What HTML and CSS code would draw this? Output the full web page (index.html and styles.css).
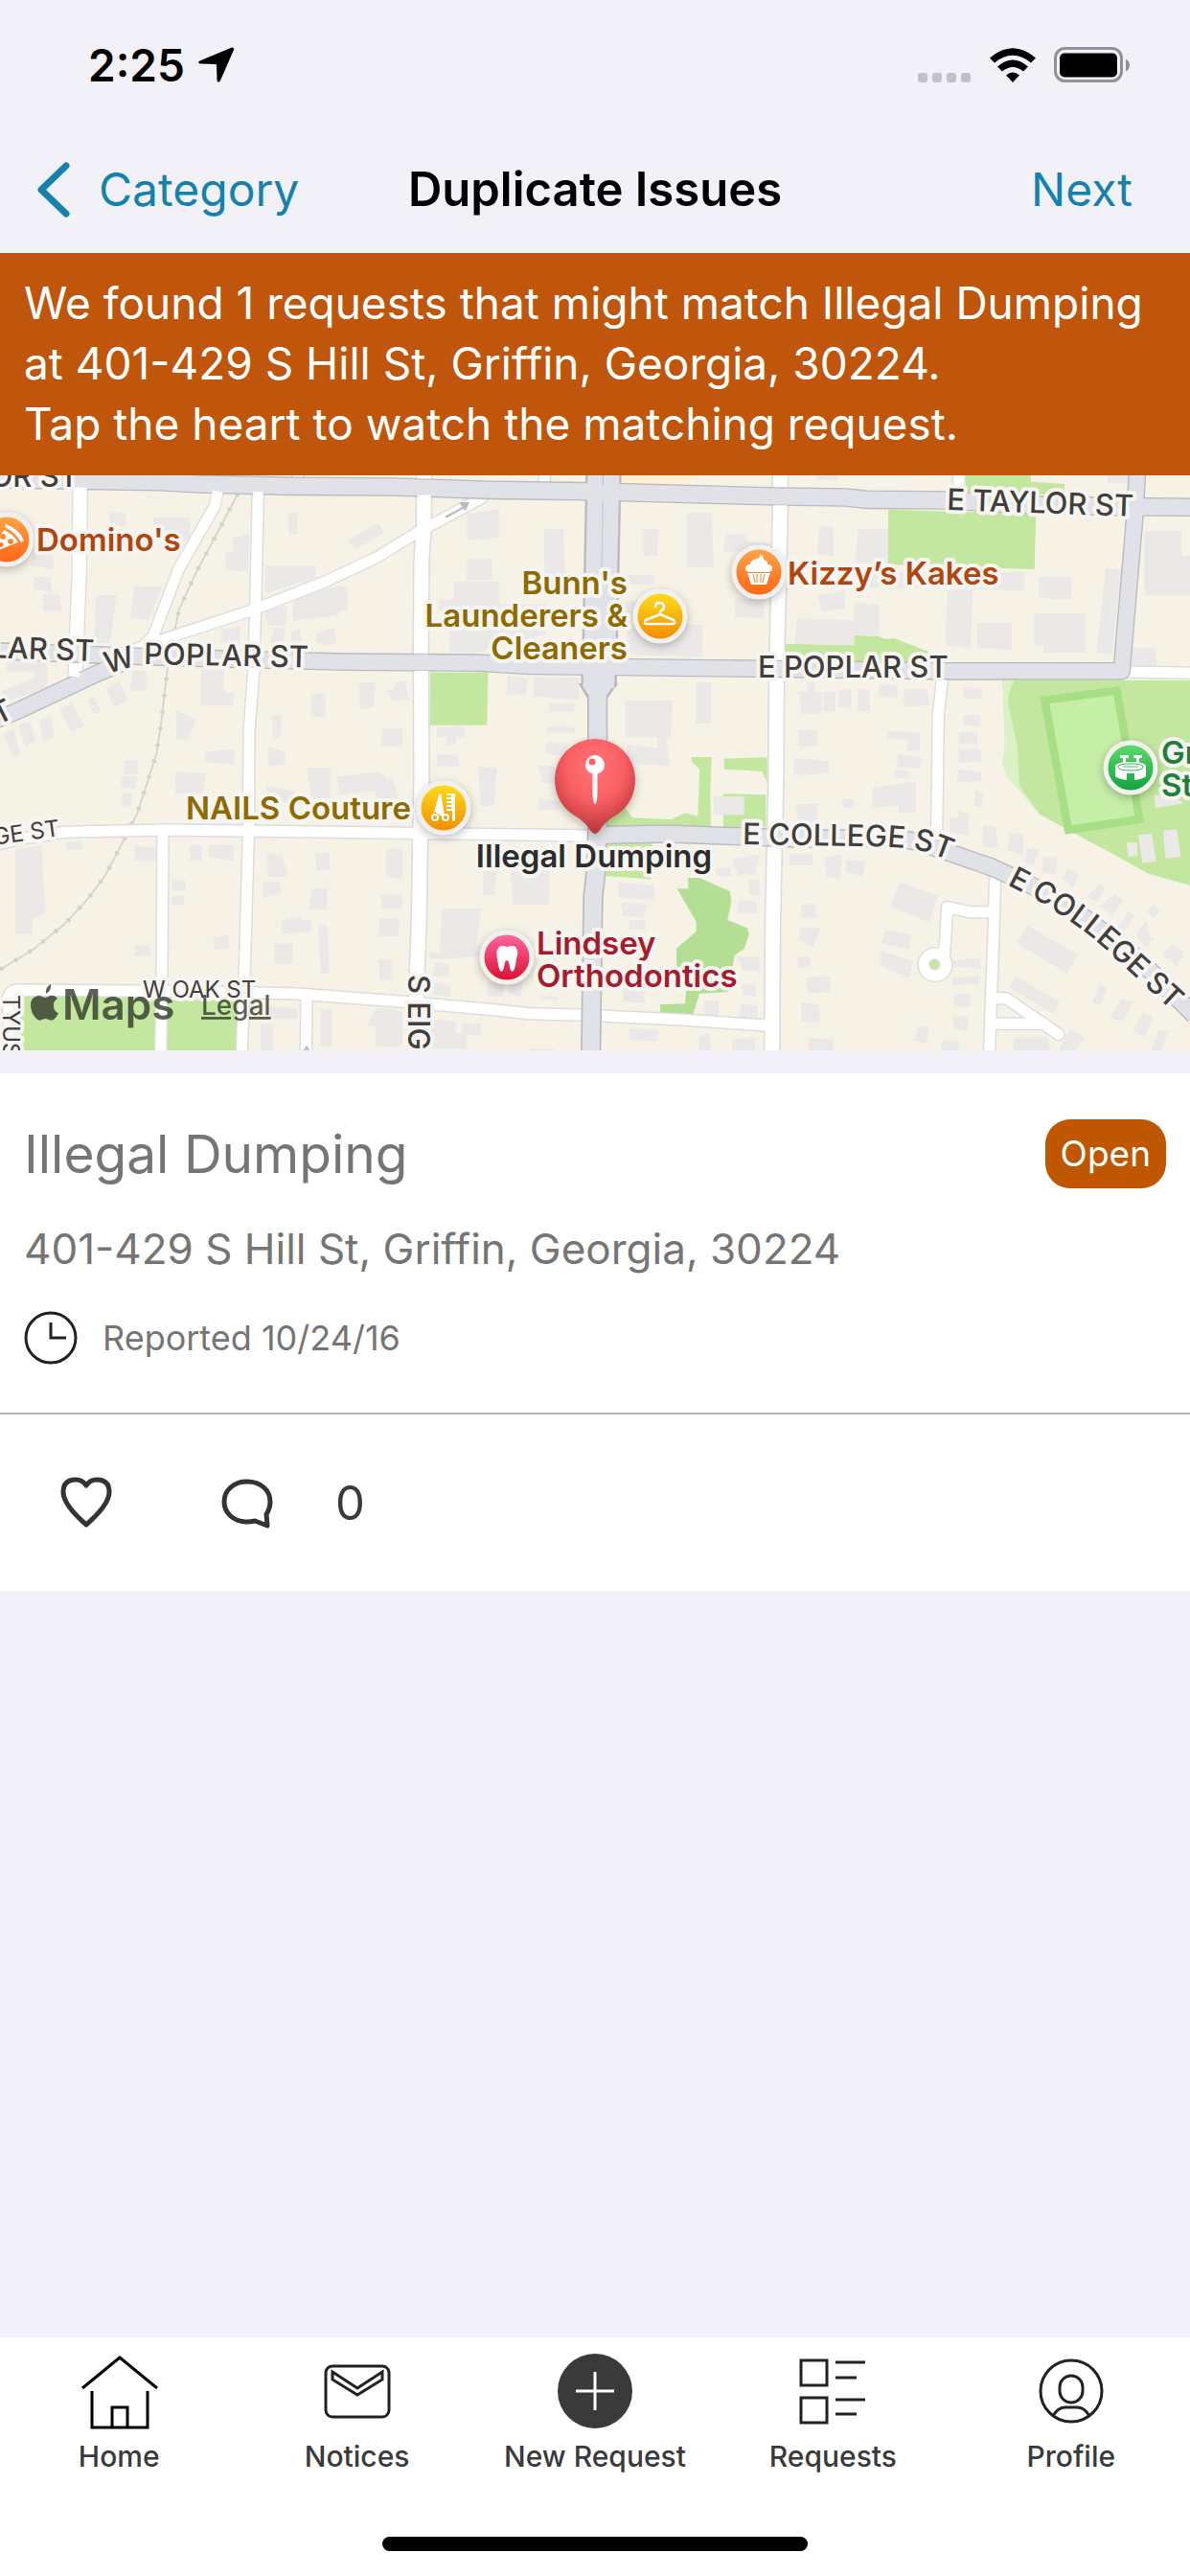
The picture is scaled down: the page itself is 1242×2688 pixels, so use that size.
FILE: index.html
```html
<!DOCTYPE html>
<html lang="en">
<head>
    <meta charset="UTF-8">
    <meta name="viewport" content="width=device-width, initial-scale=1.0">
    <title>Duplicate Issues</title>
    <link rel="stylesheet" href="styles.css">
</head>
<body>
    <!-- Status bar -->
    <div class="status-bar">
        <div class="status-left">
            <span>2:25</span>
            <svg width="40" height="40" viewBox="0 0 40 40"><path d="M37 1.5 Q39.500 1 39 4 L25 36 Q23 39.500 21.500 36 L21 20 Q21 19 20 19 L4 18.500 Q0.500 17.500 3.500 15.500 Z"/></svg>
        </div>
        <div class="status-right">
            <svg width="56" height="38" viewBox="0 0 56 38" fill="#c2c1c7"><rect y="27" width="10" height="10" rx="3"/><rect x="15" y="27" width="10" height="10" rx="3"/><rect x="30" y="27" width="10" height="10" rx="3"/><rect x="45" y="27" width="10" height="10" rx="3"/></svg>
            <svg width="48" height="38" viewBox="0 0 48 38"><path d="M0 11.500 Q24 -9 48 11.500 L43 16.500 Q24 1 5 16.500 Z M8 20.500 Q24 6.500 40 20.500 L35 25.500 Q24 16.500 13 25.500 Z M17 29.500 Q24 23.500 31 29.500 L24 37 Z"/></svg>
            <svg width="80" height="38" viewBox="0 0 80 38"><rect x="1.500" y="1.500" width="69" height="34" rx="10" fill="none" stroke="#929196" stroke-width="3"/><rect x="6" y="6.500" width="60" height="25" rx="5"/><path d="M75 12.500 Q79 15 79 19 Q79 23 75 25.500 Z" fill="#929196"/></svg>
        </div>
    </div>

    <!-- Nav bar -->
    <header class="nav-bar">
        <button class="nav-btn back-btn">
            <svg width="36" height="58" viewBox="0 0 36 58"><path d="M31 4 L5 29 L31 54" fill="none" stroke="currentColor" stroke-width="7" stroke-linecap="round" stroke-linejoin="round"/></svg>
            <span>Category</span>
        </button>
        <h1>Duplicate Issues</h1>
        <button class="nav-btn next-btn">Next</button>
    </header>

    <p class="banner">We found 1 requests that might match Illegal Dumping at 401-429 S Hill St, Griffin, Georgia, 30224.<br>Tap the heart to watch the matching request.</p>

    <!-- Map -->
    <svg class="map" viewBox="0 0 1242 600" role="img" aria-label="Map">
        <defs>
            <linearGradient id="orange" x2="0" y2="1"><stop stop-color="#ffa64a"/><stop offset="1" stop-color="#ff6414"/></linearGradient>
            <linearGradient id="yellow" x2="0" y2="1"><stop stop-color="#ffdf1c"/><stop offset="1" stop-color="#f08a00"/></linearGradient>
            <linearGradient id="pink" x2="0" y2="1"><stop stop-color="#ff6aa5"/><stop offset="1" stop-color="#d90d2c"/></linearGradient>
            <linearGradient id="green" x2="0" y2="1"><stop stop-color="#60dc6c"/><stop offset="1" stop-color="#10a040"/></linearGradient>
            <radialGradient id="pin" cx=".5" cy=".3" r=".72"><stop stop-color="#ff7478"/><stop offset=".5" stop-color="#f95f63"/><stop offset="1" stop-color="#b03238"/></radialGradient>
            <filter id="shadow" x="-50%" y="-50%" width="200%" height="200%"><feDropShadow dx="0" dy="4" stdDeviation="5" flood-opacity=".25"/></filter>
            <path id="wPoplar" d="M112 207 L148 197 L350 201"/>
            <path id="college1" d="M775 385 L900 387 Q945 387 968 393 L1030 416"/>
            <path id="college2" d="M1051 427 L1080 442 Q1120 465 1150 491 L1260 593"/>
        </defs>

        <!-- Ground shapes and streets are drawn at three units per pixel -->
        <g transform="scale(.33333)">
            <rect class="land" width="3726" height="1800"/>
            <path d="M0 780 L400 620 L520 640 L480 880 L400 1090 L0 1130 Z" fill="#f5f3e5"/>

            <g class="park">
                <path d="M1347 617 H1528 L1525 782 H1347 Z"/>
                <path d="M2781 107 L3244 122 L3239 294 L2781 280 Z"/>
                <path d="M3024 0 H3228 V20 L3333 27 V60 H3021 Z"/>
                <path d="M2460 527 L2674 532 V500 L2751 504 L2771 512 L2801 510 L2921 557 V592 H2460 Z"/>
                <path d="M3176 642 H3726 V1283 L3596 1247 L3506 1197 L3256 1062 L3191 972 L3186 882 L3156 712 Q3156 670 3176 642 Z"/>
                <path d="M1895 1100 V1080 L1950 1030 L1980 1072 L2100 1077 L2145 1057 L2185 1067 L2190 920 L2165 895 V882 H2228 L2224 990 L2226 1102 Z"/>
                <path d="M2267 887 L2402 882 V960 L2385 927 L2267 920 Z"/>
                <path d="M2265 997 L2398 1000 V1102 H2265 Z"/>
                <path d="M1895 1152 H2042 L2038 1264 L1895 1254 Z"/>
                <path d="M60 1632 H485 V1800 H60 Z M525 1642 H745 V1800 H525 Z"/>
            </g>
            <path d="M3138 642 H3176 Q3156 670 3156 712 L3186 850 L3191 972 L3256 1062 L3150 940 L3138 900 L3146 850 Z" fill="#daf2c6"/>
            <path d="M3271 704 L3497 674 L3568 1077 L3345 1110 Z" fill="#c5eea6" stroke="#a8de84" stroke-width="25"/>
            <path d="M2155 1260 H2190 L2285 1302 L2290 1332 L2278 1392 L2340 1417 L2345 1437 L2330 1482 L2300 1502 L2295 1532 L2280 1617 L2190 1622 L2170 1687 L2067 1682 V1657 L2145 1654 L2148 1617 L2118 1532 V1482 L2180 1427 V1397 L2120 1294 H2155 Z" fill="#b3de93"/>
            <path d="M1940 0 H2200 L2135 27 H1940 Z" fill="#ffefd0"/>

            <!-- Buildings -->
            <g class="building">
                <g transform="translate(0 -18)">
                    <path d="M343 136 h52 v40 h-52 Z M480 150 h116 v72 h-116 Z M105 265 L165 268 L171 314 L94 300 Z M106 336 H158 L163 385 L106 374 Z M135 390 L187 394 L193 443 H135 Z M301 393 H365 L345 543 H293 Z M420 365 H508 L466 472 L408 465 Z M903 136 h28 v64 h-28 Z M1087 222 L1183 166 L1203 198 L1112 249 Z M730 215 L781 200 L775 317 L710 316 L703 258 H730 Z M831 300 H989 V340 L831 386 Z M917 400 L1064 362 L1089 370 V443 H1061 V457 L917 473 Z M825 440 L901 425 L895 488 H840 Z M694 502 L752 488 V548 L694 540 Z M857 495 H890 L889 544 H846 Z M912 510 L939 496 L944 546 L910 540 Z M990 512 L1048 494 L1052 545 L1010 550 L988 538 Z"/>
                    <path d="M18 600 H148 V688 L18 725 L5 692 L110 652 V632 H22 Z M415 630 H458 V694 H407 Z M330 686 L374 661 L401 722 L358 744 Z M273 721 L294 710 L315 753 L296 768 Z M187 751 L223 732 L265 802 L222 824 Z M121 783 L158 774 L171 837 L136 852 Z M58 800 L94 790 L113 850 L77 866 Z M8 828 L41 810 L64 888 L43 903 Z M630 625 H702 V696 H731 V737 H630 Z M552 754 L615 782 L588 845 H552 Z M853 767 h29 l-2 70 l-27 8 Z M974 702 h45 v72 h-45 Z M1126 667 H1175 L1169 745 L1126 751 Z M1198 811 H1260 V866 H1191 Z M1212 690 L1240 688 V670 L1262 660 V722 H1225 Z M645 882 L737 875 L732 924 L638 915 Z M838 868 L895 882 L890 923 L840 929 Z M393 910 H431 V953 H387 Z M550 948 L643 952 L638 1015 H550 Z"/>
                </g>
                <g transform="translate(1230 -18)">
                    <path d="M232 140 L332 122 V214 L232 221 Z M232 280 h79 v65 h-79 Z M190 350 H332 V420 H480 V515 L260 572 H175 L180 440 H145 V408 H190 Z M475 186 H533 L541 330 H475 Z M784 186 H833 L827 271 H784 Z M920 136 H998 L1006 307 H921 Z M1042 200 H1111 L1107 225 L1178 230 V257 H1033 Z M1071 405 H1163 V466 L1071 460 Z M705 330 h114 v30 h-114 Z M735 485 H970 V587 L730 580 Z M710 410 H760 V470 H710 Z"/>
                    <path d="M10 668 L40 660 L51 719 L0 722 V686 Z M360 645 L424 655 L416 703 L354 708 Z M441 650 H582 V722 L441 710 Z M490 731 h78 v27 h-78 Z M484 803 h85 v21 h-85 Z M138 808 L225 803 V838 H198 V860 H168 V838 H138 Z M140 890 L203 893 L209 930 H138 Z M948 666 h50 v129 h-50 Z M727 723 H876 L870 838 H855 L870 930 L730 918 L733 860 L828 870 V838 H727 Z M482 852 L548 857 L540 900 L476 885 Z M455 925 L520 930 V982 H470 Z M267 932 H325 L318 1052 H275 Z M0 811 L32 812 L24 866 L0 862 Z"/>
                </g>
                <g transform="translate(2466 -18)">
                    <path d="M99 178 H143 V271 L93 265 Z M220 186 H315 V292 H210 Z M240 320 H740 V380 L500 370 H240 Z M787 336 H890 V407 L787 401 Z M996 308 L1045 314 L1016 579 L967 573 Z M1117 192 H1233 V270 H1260 V394 H1117 Z M94 393 L180 380 V437 L106 443 Z M208 415 L287 424 V520 L208 517 V550 L22 545 L28 466 L208 472 Z M500 376 H580 L574 557 L494 551 Z M594 480 H702 V566 L594 558 Z M772 450 H933 V573 H802 V551 H772 Z M1076 559 h78 v56 h-78 Z M1003 18 h65 v25 h-65 Z M91 18 H158 V35 L91 30 Z"/>
                    <path d="M63 665 h22 v30 H107 V766 L42 765 L35 695 H63 Z M112 695 H150 V758 H112 Z M164 688 H200 V745 L157 746 Z M219 688 h38 v70 h-38 Z M286 673 L344 674 V715 L286 710 Z M364 688 H438 L443 738 L364 744 Z M34 816 h59 v50 h-59 Z M313 817 L415 824 V880 H375 L380 846 L313 843 Z M344 890 L421 902 L410 936 L344 930 Z M20 903 L129 911 V950 L18 957 Z M550 680 L609 687 V716 H550 Z M550 767 H603 L601 801 H550 Z M537 822 H593 L596 859 H535 Z M537 874 H602 L608 915 L535 917 Z M536 940 L606 948 V976 H534 Z"/>
                </g>
                <g transform="translate(0 882)">
                    <path d="M379 60 H431 L424 100 L379 95 Z M386 110 L416 120 L408 158 L380 154 Z M550 45 L643 52 L636 115 H550 Z M831 88 L930 108 V140 H840 Z M960 33 H1034 V130 H975 Z M1055 60 L1185 46 L1215 70 L1226 60 L1250 130 H1180 L1172 105 L1062 118 Z M207 266 L257 262 V290 H207 Z M48 290 L130 275 L143 490 L101 505 V554 H48 Z M422 277 L488 283 V325 H422 Z M594 276 h38 v48 h-38 Z M652 276 H731 V325 L652 312 Z M538 387 L581 384 V418 L538 416 Z M538 438 L575 433 V462 H538 Z M838 297 L882 307 L902 375 H838 Z M824 390 H875 L881 425 L824 438 Z M989 303 L1031 297 V353 H989 Z M975 412 H1025 V476 H968 Z M881 512 L945 498 V510 H974 V548 L881 554 Z M996 526 H1025 L1031 677 H1004 Z M859 584 h58 v64 h-58 Z M668 563 L716 556 V597 L673 604 Z M422 589 H465 L473 620 L422 625 Z M1210 290 L1260 282 V380 L1210 375 Z M1191 432 L1260 428 V475 H1197 Z M1190 505 H1253 L1247 561 H1182 Z M1184 634 H1226 V698 H1190 Z M1003 790 h37 v116 h-37 Z M1180 785 L1260 795 V906 H1175 V842 H1147 Z M817 835 h37 v83 h-37 Z M830 780 L931 785 V820 H830 Z"/>
                </g>
                <g transform="translate(1230 882)">
                    <path d="M460 125 L520 140 V165 H453 Z M368 350 H490 V461 H376 Z M282 350 L325 340 L319 432 H282 Z M153 475 H275 L262 590 H300 L295 625 L112 632 V613 H147 Z M133 640 L176 652 V690 L126 684 Z M126 706 L180 713 V749 L124 745 Z M297 706 H347 V749 H297 Z M366 706 H405 L400 751 L362 740 Z M110 820 L197 827 V863 L232 870 V912 H110 Z M218 835 h57 v34 h-57 Z M425 912 h78 v6 h-78 Z M706 391 L819 402 V446 L706 440 Z M713 455 L797 460 L785 503 L722 497 Z M741 510 h50 v29 h-50 Z M1005 123 h95 v58 h-95 Z M1072 318 L1149 304 L1135 368 H1080 L1062 320 Z M1010 346 H1055 L1062 373 H1017 Z M1114 383 h35 v49 h-35 Z M1085 447 L1142 454 V490 H1078 Z M1077 625 h70 v43 h-50 Z M1092 710 L1137 712 V749 L1098 745 Z M976 763 h44 v48 h-44 Z M1090 770 L1142 780 V818 H1087 Z M720 720 L785 735 L789 770 L720 768 Z M741 850 L833 855 L825 891 L741 884 Z M956 880 L990 863 L998 918 H960 Z M1063 882 L1135 878 V918 H1063 Z M460 745 L512 750 V763 L470 755 Z"/>
                </g>
                <g transform="translate(2466 882)">
                    <path d="M265 97 L401 76 V174 H348 V150 L265 159 Z M171 132 h36 v27 h-36 Z M28 147 H93 V205 H30 Z M334 39 L380 42 V65 H334 Z M534 39 L600 45 L608 73 L529 80 Z M587 103 L614 112 L607 158 L585 152 Z M508 190 H534 V168 L566 178 V246 L508 237 Z M614 211 L652 220 L659 283 L610 280 Z M694 238 L739 241 L737 308 L688 292 Z M752 283 L787 290 L770 339 L739 328 Z M800 311 H845 L839 367 L796 363 Z M878 347 L910 370 L894 409 L860 382 Z M940 437 L976 397 L995 408 L968 453 Z M976 467 L1025 427 L1053 450 L1017 495 Z M1032 532 L1067 484 L1087 496 L1056 545 Z M1090 555 L1124 513 L1128 545 L1145 570 L1120 596 Z M1175 617 L1203 584 L1244 613 L1217 655 Z M1125 485 L1145 461 L1167 480 L1145 503 Z M1148 120 H1210 L1238 145 L1153 160 Z M1061 268 H1095 V309 L1067 312 Z M1098 244 L1140 240 L1154 326 L1111 332 Z M1176 231 L1218 226 L1232 312 L1183 318 Z"/>
                    <path d="M6 304 h72 v35 h-72 Z M115 312 L171 304 L164 382 L122 374 Z M183 320 L242 326 L236 374 L183 360 Z M349 391 L471 434 L445 518 L321 467 Z M43 460 H86 L92 503 H43 Z M40 533 H107 L80 596 L35 573 Z M306 541 L385 554 L382 604 L294 583 Z M292 606 L393 639 L382 690 L292 655 Z M28 625 H71 V655 L35 661 Z M57 690 L134 684 V734 L64 741 Z M43 769 L100 776 V832 L43 827 Z M65 878 L143 884 V918 H67 Z M411 841 L443 847 L436 898 L395 888 Z M515 640 L600 627 L607 662 L515 655 Z M515 692 L602 685 V711 L515 713 Z M522 741 h51 v41 h-51 Z M516 813 L565 810 V861 L524 850 Z M485 885 L536 890 V918 H480 Z M752 527 L910 619 L875 677 L717 583 Z M714 685 L852 768 L833 805 L695 722 Z M708 877 H816 L823 918 H708 Z M978 711 L1003 722 L980 776 L953 769 Z M1045 756 L1081 766 L1052 826 L1009 818 Z M1113 798 L1145 812 L1119 876 L1081 859 Z M1160 856 H1194 L1170 918 H1140 Z M885 850 L931 878 L900 918 H848 Z"/>
                </g>
            </g>

            <!-- Railway -->
            <path d="M745 57 L690 162 L615 302 L560 422 L525 600 L505 772 L490 872 L430 1057 L390 1137 L330 1252 L270 1332 L200 1407 L100 1487 L0 1547" fill="none" stroke="#d3d1cb" stroke-width="5"/>
            <path d="M745 57 L690 162 L615 302 L560 422 L525 600 L505 772 L490 872 L430 1057 L390 1137 L330 1252 L270 1332 L200 1407 L100 1487 L0 1547" fill="none" stroke="#d3d1cb" stroke-width="14" stroke-dasharray="9 43"/>

            <!-- Minor streets: casing first, then the white surface -->
            <g class="street-case">
                <path stroke-width="50" d="M251 40 L248 312 L240 512 L235 640"/>
                <path stroke-width="40" d="M682 50 L672 97 L560 292 L480 502 L440 545 M430 542 L560 497 L790 422 L1020 332 L1180 257 L1260 207 L1320 172 L1510 70"/>
                <path stroke-width="42" d="M808 50 L800 412 L795 600 L780 802 L778 1122 L765 1582 L757 1810 M510 1110 L507 1582 L503 1810 M960 1630 L958 1810 M932 -10 V20 M1705 -10 V30 M3003 -10 L3001 60 M2950 640 L2938 750 L2933 1117"/>
                <path stroke-width="54" d="M1328 -10 L1327 162 L1320 262 L1318 562 L1320 942 L1316 1132 L1312 1382 L1305 1582 L1300 1810 M2443 -10 V100 L2432 600 L2430 942 L2420 1382 L2417 1810"/>
                <path stroke-width="42" d="M-10 1155 L60 1138 L200 1117 L520 1110 L1260 1120 L1860 1128 M30 1810 L25 1640 Q28 1612 60 1611 L480 1615 L920 1622 L1160 1640 L1260 1648 L1530 1672 L1660 1685 L1830 1690 L2130 1704 L2400 1722 M3116 1257 L3111 1442 L3104 1622 L3098 1810 M3106 1367 H3036 L2966 1352 L2961 1442 L2956 1502 M3106 1637 H3151 L3314 1750 M3106 1717 H3270 M3530 615 L3726 619"/>
                <circle cx="2928" cy="1532" r="34" stroke-width="44"/>
            </g>
            <g class="street">
                <path stroke-width="42" d="M251 40 L248 312 L240 512 L235 640"/>
                <path stroke-width="32" d="M682 50 L672 97 L560 292 L480 502 L440 545 M430 542 L560 497 L790 422 L1020 332 L1180 257 L1260 207 L1320 172 L1510 70"/>
                <path stroke-width="33" d="M808 50 L800 412 L795 600 L780 802 L778 1122 L765 1582 L757 1810 M510 1110 L507 1582 L503 1810 M960 1630 L958 1810 M932 -10 V20 M1705 -10 V30 M3003 -10 L3001 60 M2950 640 L2938 750 L2933 1117"/>
                <path stroke-width="44" d="M1328 -10 L1327 162 L1320 262 L1318 562 L1320 942 L1316 1132 L1312 1382 L1305 1582 L1300 1810 M2443 -10 V100 L2432 600 L2430 942 L2420 1382 L2417 1810"/>
                <path stroke-width="33" d="M-10 1155 L60 1138 L200 1117 L520 1110 L1260 1120 L1860 1128 M30 1810 L25 1640 Q28 1612 60 1611 L480 1615 L920 1622 L1160 1640 L1260 1648 L1530 1672 L1660 1685 L1830 1690 L2130 1704 L2400 1722 M3116 1257 L3111 1442 L3104 1622 L3098 1810 M3106 1367 H3036 L2966 1352 L2961 1442 L2956 1502 M3106 1637 H3151 L3314 1750 M3106 1717 H3270 M3530 615 L3726 619"/>
                <circle cx="2928" cy="1532" r="34" stroke-width="35"/>
            </g>
            <circle cx="2926" cy="1531" r="16" fill="#c4e7a0" stroke="#dcdddc" stroke-width="5"/>

            <!-- Main roads -->
            <g class="road-case">
                <path stroke-width="59" d="M-10 12 L500 20 L620 27 L910 34 L1230 36 L1530 46 L1830 50 L2430 66 L2650 69 L2711 76 L2966 78 L3200 92 L3520 98 L3740 100"/>
                <path stroke-width="56" d="M-10 550 L300 562 L600 572 L1085 584 L1500 587 L1660 597 L2430 606 L2966 613 H3512 L3553 130 L3561 -10"/>
                <path stroke-width="56" d="M400 580 L300 622 L60 735 L-10 765"/>
                <path stroke-width="112" d="M1890 -10 L1888 80 L1878 560 L1875 660"/>
                <path stroke-width="64" d="M1871 640 V1100 L1866 1240 L1857 1320 L1850 1810"/>
                <path stroke-width="58" d="M1860 1127 L2090 1122 L2490 1137 L2780 1137 Q2840 1137 2890 1153 L3106 1227 L3226 1282 Q3300 1318 3350 1350 L3560 1510 L3740 1690"/>
            </g>
            <path d="M1818 655 L1825 668 L1840 692 H1902 L1918 668 L1928 655 Z" fill="#e1e2e7" stroke="#b9babf" stroke-width="8"/>
            <g class="road">
                <path stroke-width="51" d="M-10 12 L500 20 L620 27 L910 34 L1230 36 L1530 46 L1830 50 L2430 66 L2650 69 L2711 76 L2966 78 L3200 92 L3520 98 L3740 100"/>
                <path stroke-width="48" d="M-10 550 L300 562 L600 572 L1085 584 L1500 587 L1660 597 L2430 606 L2966 613 H3512 L3553 130 L3561 -10"/>
                <path stroke-width="48" d="M400 580 L300 622 L60 735 L-10 765"/>
                <path stroke-width="98" d="M1890 -10 L1888 80 L1878 560 L1874 664"/>
                <path stroke-width="54" d="M1871 640 V1100 L1866 1240 L1857 1320 L1850 1810"/>
                <path stroke-width="50" d="M1860 1127 L2090 1122 L2490 1137 L2780 1137 Q2840 1137 2890 1153 L3106 1227 L3226 1282 Q3300 1318 3350 1350 L3560 1510 L3740 1690"/>
            </g>
            <g fill="none" stroke="#fff">
                <path stroke-width="42" d="M251 38 V60 M1328 -4 V10 M1328 62 V80 M2443 -4 V36 M2443 94 V110 M1318 560 V562 M1318 612 V640"/>
                <path stroke-width="32" d="M682 50 L678 66 M808 52 V66 M234 616 L233 630 M2950 640 L2947 660 M795 602 V620"/>
            </g>
            <path d="M1888 0 V30 M1888 80 L1884 300" stroke="#c9cbd0" stroke-width="4"/>
            <path d="M1393 128 L1447 99 L1438 84 L1470 84 L1458 112 L1451 104 L1397 134 Z" fill="#bcbcbc"/>
            <path d="M950 1799 L960 1784 L970 1799 Z" fill="#bcbcbc"/>
        </g>

        <!-- Street names -->
        <g class="road-name">
            <text x="82" y="12" text-anchor="end">OR ST</text>
            <text x="98" y="194" text-anchor="end" transform="rotate(2 98 194)">LAR ST</text>
            <text><textPath href="#wPoplar">W POPLAR ST</textPath></text>
            <text x="-20" y="270" transform="rotate(-27 -20 270)">ST</text>
            <text x="791" y="211">E POPLAR ST</text>
            <text x="988" y="36" transform="rotate(2 988 36)">E TAYLOR ST</text>
            <text><textPath href="#college1">E COLLEGE ST</textPath></text>
            <text><textPath href="#college2">E COLLEGE ST</textPath></text>
            <text x="426" y="521" transform="rotate(90 426 521)">S EIG</text>
        </g>
        <g class="road-name small">
            <text x="63" y="376" text-anchor="end" transform="rotate(-8 63 376)">GE ST</text>
            <text x="149" y="545">W OAK ST</text>
            <text x="3" y="542" transform="rotate(90 3 542)">TYUS</text>
        </g>

        <!-- Places -->
        <g class="place-dot">
            <circle cx="7" cy="67" r="26" fill="url(#orange)"/>
            <circle cx="792" cy="101" r="26" fill="url(#orange)"/>
            <circle cx="689" cy="147" r="26" fill="url(#yellow)"/>
            <circle cx="463" cy="347" r="26" fill="url(#yellow)"/>
            <circle cx="529" cy="503" r="26" fill="url(#pink)"/>
            <circle cx="1180" cy="305" r="26" fill="url(#green)"/>
        </g>
        <g fill="#fff">
            <!-- pizza slice -->
            <path d="M6 51 Q20 56 25 68 L22 70 Q16 59 5 54 Z"/>
            <path fill-rule="evenodd" d="M4 57 Q14 61 19 70 L-10 81 Z M11 66 a3 3 0 1 0 .1 0 Z M1 70 a2.500 2.500 0 1 0 .1 0 Z"/>
            <circle cx="3" cy="64" r="3" fill="#ff8a30"/>
            <!-- cupcake -->
            <path d="M790 87 Q794 86 793 82 Q798 85 797 88 Q802 89 801 93 Q806 93 806 97 Q806 100 802 101 H782 Q778 100 778 97 Q778 93 783 93 Q783 88 790 87 Z M780 102 H804 L800 114 H784 Z"/>
            <path d="M786 103 L788 112 M790 103 V112 M794 103 V112 M798 103 L796 112" stroke="#ff7b27" stroke-width="1"/>
            <!-- hanger -->
            <path d="M684 137 Q684 133 688 133 Q693 133 693 137 Q693 140 689 142 V145 L703 151 Q706 155 702 155 H675 Q671 155 674 151 L689 145" fill="none" stroke="#fff" stroke-width="2.500" stroke-linejoin="round" stroke-linecap="round"/>
            <!-- scissors and comb -->
            <path d="M458 333 Q461 330 461 338 L464 355 L461 356 L454 351 L452 354 Q456 342 458 333 Z M466 332 H475 V360 Q473 362 472 360 V350 H466 V348 H471 V346 H466 V344 H471 V342 H466 V340 H471 V338 H466 V336 H471 V334 H466 Z"/>
            <circle cx="454" cy="357" r="3" fill="none" stroke="#fff" stroke-width="2"/>
            <circle cx="465" cy="357" r="3" fill="none" stroke="#fff" stroke-width="2"/>
            <!-- tooth -->
            <path d="M521 492 Q524 490 529 492 Q535 490 538 492 Q542 497 539 504 Q538 514 536 517 Q533 519 532 513 Q531 506 529 506 Q527 506 526 513 Q525 519 522 517 Q520 513 519 504 Q517 496 521 492 Z"/>
            <!-- stadium -->
            <path d="M1169 292 h9 v3 h-3 v5 h-3 v-5 h-3 Z M1183 292 h9 v3 h-3 v5 h-3 v-5 h-3 Z M1164 304 Q1164 299 1180 299 Q1196 299 1196 304 V314 Q1192 317 1184 318 V311 H1176 V318 Q1168 317 1164 314 Z"/>
            <path d="M1167 304 Q1167 301 1180 301 Q1193 301 1193 304 Q1193 308 1180 308 Q1167 308 1167 304 Z M1172 304 H1188" fill="none" stroke="#31bd55" stroke-width="1"/>
        </g>
        <g class="place-name">
            <g fill="#b0460e">
                <text x="38" y="79">Domino's</text>
                <text x="822" y="114">Kizzy’s Kakes</text>
            </g>
            <g fill="#8f6a00">
                <text x="655" y="124" text-anchor="end">Bunn's</text>
                <text x="655" y="158" text-anchor="end">Launderers &amp;</text>
                <text x="655" y="192" text-anchor="end">Cleaners</text>
                <text x="429" y="359" text-anchor="end">NAILS Couture</text>
            </g>
            <g fill="#a51d2d">
                <text x="560" y="500">Lindsey</text>
                <text x="560" y="534">Orthodontics</text>
            </g>
            <g fill="#1d8038">
                <text x="1212" y="301">Gr</text>
                <text x="1212" y="335">St</text>
            </g>
            <text x="620" y="409" text-anchor="middle" fill="#2c2c2c">Illegal Dumping</text>
        </g>

        <!-- Pin -->
        <path d="M621 374 Q618 374 613 366 Q607 359 598 354 Q579 341 579 317 A42 42 0 0 1 663 317 Q663 341 644 354 Q635 359 629 366 Q624 374 621 374 Z" fill="url(#pin)" filter="url(#shadow)"/>
        <path d="M618.500 310 H623.500 V334 Q622.500 343 621 343 Q619.500 343 618.500 334 Z" fill="#fff"/>
        <circle cx="621" cy="302" r="10" fill="#fff"/>
        <circle cx="618" cy="299" r="3.500" fill="#fb6165"/>

        <!-- Attribution -->
        <g class="credit">
            <path d="M48 541 Q47 534 53 531 Q54 538 48 541 Z M47 545 Q49 545 52 543 Q57 542 60 546 Q55 549 56 555 Q57 560 61 561 Q59 566 56 568 Q53 569 51 568 Q47 566 44 568 Q40 570 37 566 Q32 560 32 553 Q32 546 37 544 Q41 542 44 544 Z"/>
            <text x="65" y="568" font-size="44" font-weight="600">Maps</text>
            <a href="#legal"><text x="210" y="563" font-size="28" font-weight="500" text-decoration="underline">Legal</text></a>
        </g>
    </svg>

    <!-- Matching request -->
    <main class="card">
        <div class="card-body">
            <div class="card-top">
                <h2>Illegal Dumping</h2>
                <span class="badge">Open</span>
            </div>
            <p class="address">401-429 S Hill St, Griffin, Georgia, 30224</p>
            <div class="reported">
                <svg width="56" height="56" viewBox="0 0 56 56" fill="none" stroke="#222" stroke-width="3"><circle cx="28" cy="28" r="26"/><path d="M28 12 V28 H44"/></svg>
                <span>Reported 10/24/16</span>
            </div>
        </div>
        <div class="card-actions">
            <button aria-label="Watch"><svg width="56" height="56" viewBox="0 0 56 56"><path d="M28 51 Q4 30 4 17 Q4 4 17 4 Q24 4 28 10 Q32 4 39 4 Q52 4 52 17 Q52 30 28 51 Z"/></svg></button>
            <button class="comments"><svg width="56" height="56" viewBox="0 0 56 56"><path d="M48 40 L49 52 L36 47 Q32 48 28 48 C14 48 4 39 4 27 C4 15 14 6 28 6 C42 6 52 15 52 27 Q52 34 48 40 Z"/></svg><span>0</span></button>
        </div>
    </main>

    <!-- Tab bar -->
    <nav class="tab-bar">
        <a href="#home">
            <svg width="80" height="80" viewBox="0 0 80 80"><path d="M2 37 L41 5 L80 37 M12 40 V78 H70 V40 M33 78 V57 H49 V78"/></svg>
            <span>Home</span>
        </a>
        <a href="#notices">
            <svg width="80" height="80" viewBox="0 0 80 80"><rect x="7" y="14" width="66" height="53" rx="7"/><path d="M14 20 L40 37 L66 20 V28 L40 44 L14 28 Z"/></svg>
            <span>Notices</span>
        </a>
        <a href="#new">
            <svg width="80" height="80" viewBox="0 0 80 80"><circle cx="40" cy="40" r="39" fill="#3a3a3a" stroke="none"/><path d="M20 40 H60 M40 20 V60" stroke="#fff"/></svg>
            <span>New Request</span>
        </a>
        <a href="#requests">
            <svg width="80" height="80" viewBox="0 0 80 80"><path d="M7 8 H34 V34 H7 Z M7 47 H34 V73 H7 Z M43 10 H74 M43 26 H65 M43 49 H74 M43 64 H65"/></svg>
            <span>Requests</span>
        </a>
        <a href="#profile">
            <svg width="80" height="80" viewBox="0 0 80 80"><circle cx="40" cy="40" r="32"/><rect x="28" y="24" width="24" height="28" rx="12"/><path d="M21 66 Q26 57 34 57 H46 Q54 57 59 66"/></svg>
            <span>Profile</span>
        </a>
        <div class="home-indicator"></div>
    </nav>
</body>
</html>
```
FILE: styles.css
```css
* { box-sizing: border-box; margin: 0; padding: 0; font-family: Inter, "Liberation Sans", sans-serif; }
body { display: flex; flex-direction: column; min-height: 100vh; background: #f2f1f7; color: #000; }
svg { display: block; flex: none; }
button { background: none; border: none; cursor: pointer; }

/* Status bar */
.status-bar { display: flex; justify-content: space-between; align-items: center; height: 136px; padding: 0 62px 0 92px; }
.status-left { display: flex; align-items: center; gap: 12px; font-size: 46px; font-weight: 600; }
.status-right { display: flex; align-items: center; gap: 19px; }

/* Nav bar */
.nav-bar { display: grid; grid-template-columns: 1fr auto 1fr; align-items: center; height: 128px; padding: 0 38px 5px; }
.nav-bar h1 { font-size: 49px; font-weight: 600; }
.nav-btn { color: #1482ad; font-size: 48px; }
.back-btn { display: flex; align-items: center; gap: 29px; }
.next-btn { justify-self: end; padding-right: 22px; }

.banner { padding: 21px 25px 22px; background: #c0560c; color: #fff; font-size: 46px; line-height: 63px; }

/* Map */
.map { width: 100%; height: auto; overflow: hidden; }
.land { fill: #f6f2e6; }
.park { fill: #c4e7a0; }
.building { fill: #ebe9e8; }
.street, .street-case, .road, .road-case { fill: none; stroke-linejoin: round; }
.street-case { stroke: #dcdddc; stroke-linecap: round; }
.street { stroke: #fff; stroke-linecap: round; }
.road-case { stroke: #b9babf; }
.road { stroke: #e1e2e7; }
.road-name, .place-name { paint-order: stroke; stroke: #f6f5f1; stroke-width: 8px; stroke-linejoin: round; }
.road-name { fill: #413e3b; font-size: 31px; font-weight: 500; }
.road-name.small { font-size: 24px; font-weight: 400; }
.place-name { font-size: 33px; font-weight: 600; }
.place-dot { stroke: #f3f1ed; stroke-width: 5px; filter: drop-shadow(0 3px 5px rgba(0, 0, 0, 0.25)); }
.credit { fill: #333a2b; opacity: 0.8; }

/* Request card */
.card { margin-top: 24px; background: #fff; color: #757575; }
.card-body { padding: 48px 25px 50px; border-bottom: 2px solid #b4b4b4; }
.card-top { display: flex; justify-content: space-between; align-items: center; }
.card-top h2 { font-size: 55px; font-weight: 400; }
.badge { padding: 0 16px; border-radius: 26px; background: #bf5700; color: #fff; font-size: 37px; line-height: 72px; }
.address { margin-top: 33px; font-size: 44px; line-height: 60px; }
.reported { display: flex; align-items: center; gap: 26px; margin-top: 35px; font-size: 36px; }
.card-actions { display: flex; align-items: center; gap: 112px; height: 184px; padding: 0 62px; }
.card-actions button { display: flex; align-items: center; gap: 64px; color: #3a3a3a; font-size: 49px; }
.card-actions path { fill: none; stroke: #333; stroke-width: 5px; stroke-linejoin: round; }

/* Tab bar */
.tab-bar { display: grid; grid-template-columns: repeat(5, 1fr); margin-top: auto; padding: 16px 0 26px; background: #fff; }
.tab-bar a { display: flex; flex-direction: column; align-items: center; gap: 10px; color: #3a3a3a; font-size: 30px; font-weight: 500; line-height: 36px; text-decoration: none; }
.tab-bar svg { overflow: visible; fill: none; stroke: #222; stroke-width: 3px; }
.tab-bar a:first-child svg { stroke: #000; }
.home-indicator { grid-column: 1 / -1; justify-self: center; width: 444px; height: 15px; margin-top: 66px; border-radius: 8px; background: #000; }
```
